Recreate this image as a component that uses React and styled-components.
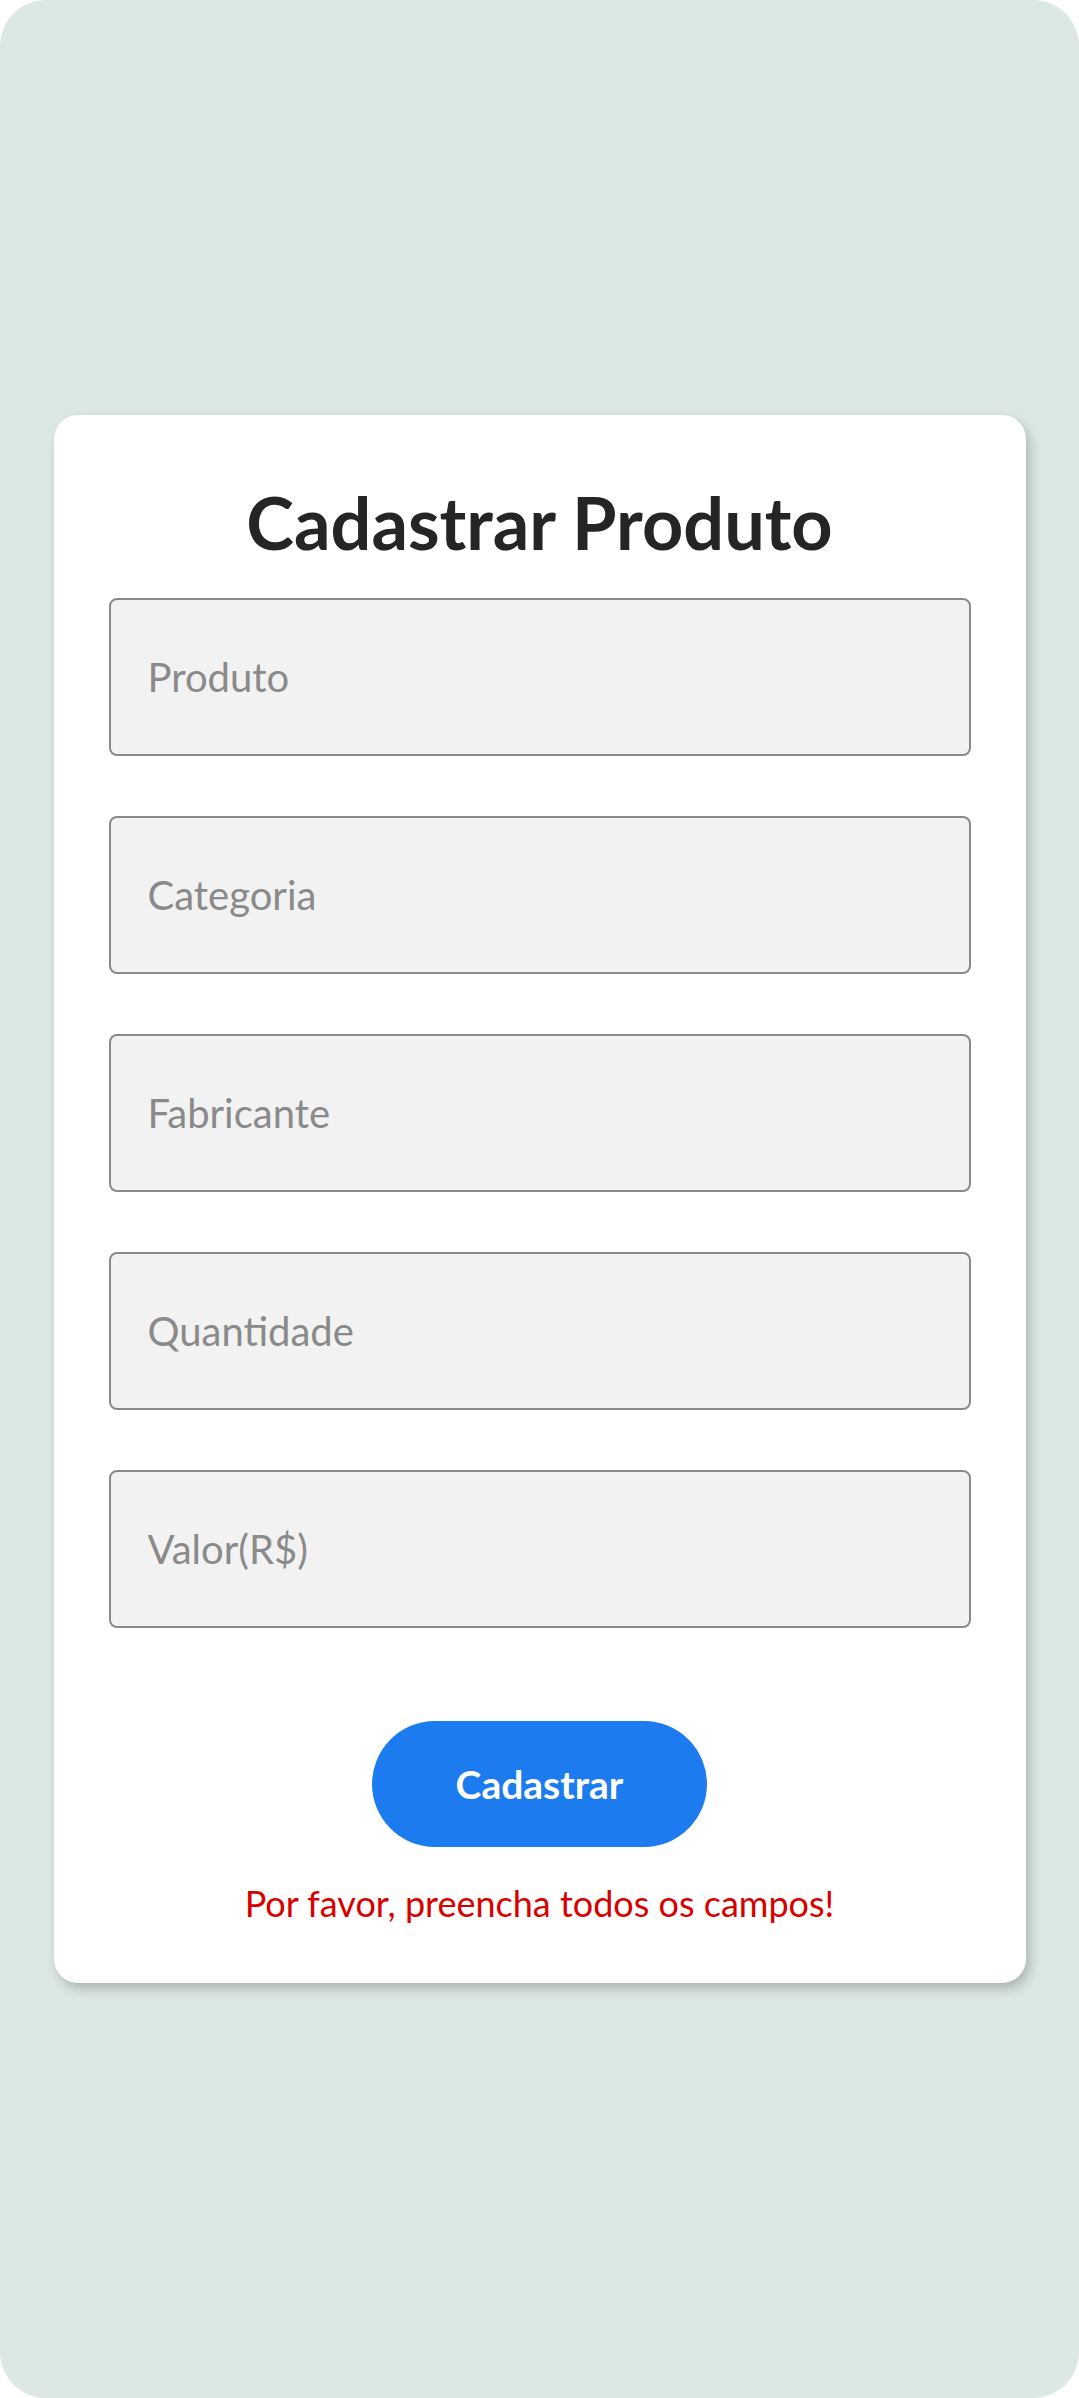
import styled, { createGlobalStyle } from "styled-components"

const Global = createGlobalStyle`
  body {
    margin: 0;
    background: #ffffff;
    font-family: Lato, "Open Sans", sans-serif;
  }
`

const Screen = styled.div`
  width: 1079px;
  height: 2398px;
  background: #dce9e2;
  border-radius: 46px;
  display: flex;
  align-items: center;
  justify-content: center;
`

const Card = styled.div`
  width: 972px;
  box-sizing: border-box;
  background: #ffffff;
  border-radius: 24px;
  box-shadow: 4px 6px 12px rgba(0, 0, 0, 0.22);
  padding: 64px 55px 58px;
  display: flex;
  flex-direction: column;
  align-items: center;
`

const Title = styled.h1`
  margin: 0 0 33px;
  font-size: 72px;
  line-height: 86px;
  font-weight: 700;
  color: #252525;
`

const Form = styled.div`
  width: 100%;
  display: flex;
  flex-direction: column;
  gap: 60px;
`

const Field = styled.input`
  width: 100%;
  height: 158px;
  box-sizing: border-box;
  border: 2px solid #8a8a8a;
  border-radius: 8px;
  background: #f2f2f2;
  padding: 0 37px;
  font-family: inherit;
  font-size: 40px;
  color: #333;
  outline: none;

  &::placeholder {
    color: #8a8a8a;
  }
`

const Button = styled.button`
  margin-top: 93px;
  width: 335px;
  height: 126px;
  border: none;
  border-radius: 63px;
  background: #1c7bef;
  color: #ffffff;
  font-family: inherit;
  font-size: 39px;
  font-weight: 700;
`

const Error = styled.p`
  margin: 34px 0 0;
  font-size: 36px;
  color: #d90000;
`

const fields = ["Produto", "Categoria", "Fabricante", "Quantidade", "Valor(R$)"]

export default function App() {
  return (
    <>
      <Global />
      <Screen>
        <Card>
          <Title>Cadastrar Produto</Title>
          <Form>
            {fields.map((f) => (
              <Field key={f} placeholder={f} />
            ))}
          </Form>
          <Button>Cadastrar</Button>
          <Error>Por favor, preencha todos os campos!</Error>
        </Card>
      </Screen>
    </>
  )
}
